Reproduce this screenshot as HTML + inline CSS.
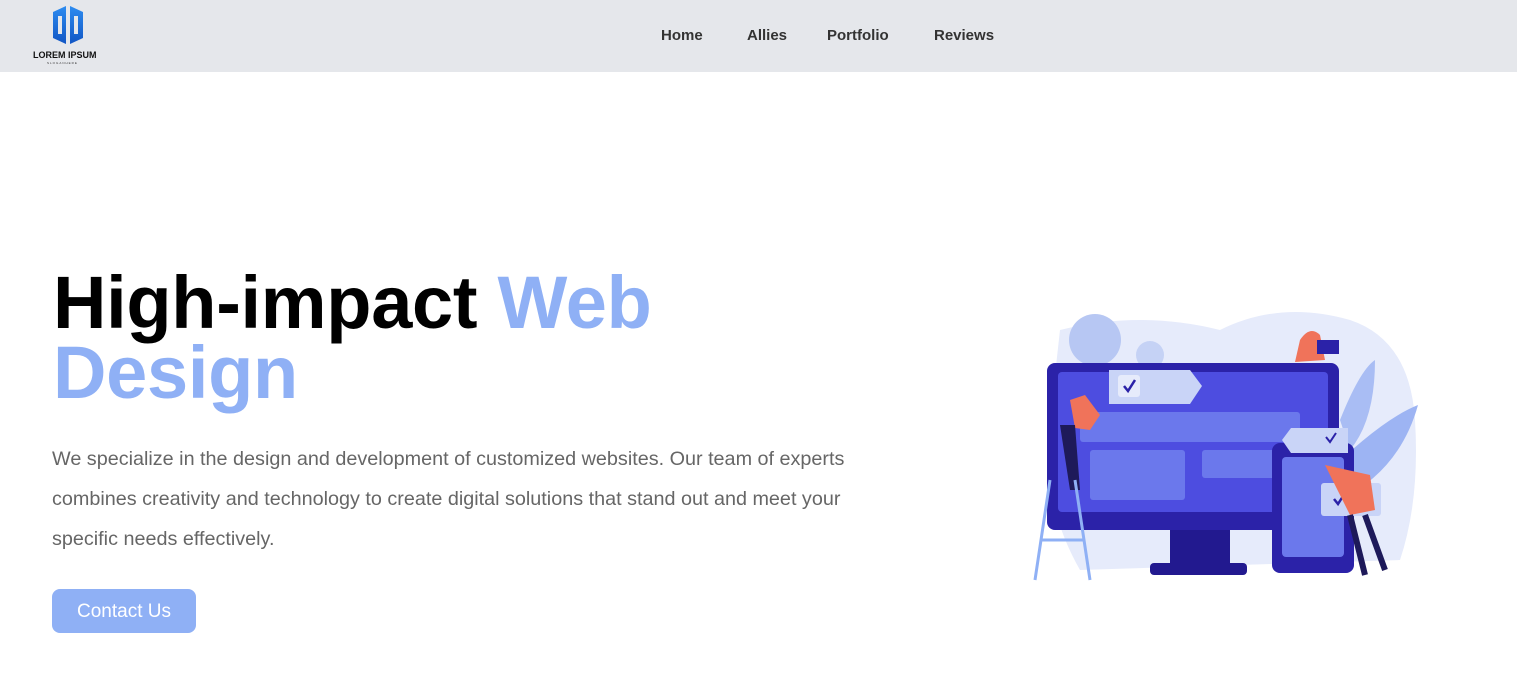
<!DOCTYPE html>
<html><head><meta charset="utf-8"><style>
*{margin:0;padding:0;box-sizing:border-box}
body{width:1517px;height:685px;overflow:hidden;background:#fff;font-family:"Liberation Sans",sans-serif;position:relative}
.nav{position:absolute;top:0;left:0;width:1517px;height:72px;background:#e5e7eb}
.nav a{position:absolute;top:27px;font-size:15px;font-weight:bold;color:#333;text-decoration:none}
h1{position:absolute;left:53px;top:268px;font-size:74px;line-height:70px;font-weight:bold;color:#000;letter-spacing:-0.3px}
h1 span{color:#8fb0f5}
p{position:absolute;left:52px;top:439px;width:830px;font-size:19.8px;line-height:40px;color:#666}
.btn{position:absolute;left:52px;top:589px;width:144px;height:44px;border-radius:8px;background:#8fb0f5;color:#fff;font-size:19px;text-align:center;line-height:46px}
</style></head><body>
<div class="nav">
<svg style="position:absolute;left:50px;top:4px" width="36" height="42" viewBox="0 0 36 42">
<defs><linearGradient id="g" x1="0" y1="0" x2="0" y2="1"><stop offset="0" stop-color="#2d8cf0"/><stop offset="1" stop-color="#1256c4"/></linearGradient></defs>
<path d="M3 8 L16 2 L16 40 L3 34 Z" fill="url(#g)"/><path d="M20 2 L33 8 L33 34 L20 40 Z" fill="url(#g)"/>
<rect x="8" y="12" width="4" height="18" fill="#e5e7eb"/><rect x="24" y="12" width="4" height="18" fill="#e5e7eb"/></svg>
<div style="position:absolute;left:33px;top:50px;font-size:9px;font-weight:bold;color:#111">LOREM IPSUM</div>
<div style="position:absolute;left:47px;top:61px;font-size:3px;letter-spacing:1px;color:#333">SLOGANHERE</div>
<a style="left:661px">Home</a><a style="left:747px">Allies</a><a style="left:827px">Portfolio</a><a style="left:934px">Reviews</a>
</div>
<h1>High-impact <span>Web<br>Design</span></h1>
<p>We specialize in the design and development of customized websites. Our team of experts combines creativity and technology to create digital solutions that stand out and meet your specific needs effectively.</p>
<div class="btn">Contact Us</div>
<svg style="position:absolute;left:1020px;top:300px" width="410" height="290" viewBox="0 0 410 290">
<path d="M40 30 Q120 10 200 30 Q260 0 330 20 Q390 40 395 120 Q400 200 380 260 L60 270 Q20 200 30 120 Z" fill="#e6ebfb"/>
<circle cx="75" cy="40" r="26" fill="#b7c7f3"/><circle cx="130" cy="55" r="14" fill="#c5d2f5"/>
<path d="M300 180 Q360 120 398 105 Q380 170 320 200 Z" fill="#9db4f3"/>
<path d="M320 120 Q340 70 355 60 Q355 120 330 150Z" fill="#a9bdf4"/>
<rect x="27" y="63" width="292" height="167" rx="8" fill="#2b22a8"/>
<rect x="38" y="72" width="270" height="140" rx="4" fill="#4d4de0"/>
<rect x="60" y="112" width="220" height="30" rx="3" fill="#6b78ec"/>
<rect x="70" y="150" width="95" height="50" rx="3" fill="#6b78ec"/>
<rect x="182" y="150" width="100" height="28" rx="3" fill="#6b78ec"/>
<rect x="150" y="230" width="60" height="33" fill="#22198f"/>
<rect x="130" y="263" width="97" height="12" rx="4" fill="#22198f"/>
<rect x="252" y="143" width="82" height="130" rx="8" fill="#2b22a8"/>
<rect x="262" y="157" width="62" height="100" rx="4" fill="#6b78ec"/>
<path d="M89 70 L170 70 L182 86 L170 104 L89 104 Z" fill="#c9d4f7"/>
<rect x="98" y="75" width="22" height="22" rx="3" fill="#e6ebfb"/><path d="M104 86 L108 91 L115 80" stroke="#2b22a8" stroke-width="2.5" fill="none"/>
<path d="M262 140 L271 128 L328 128 L328 153 L271 153 Z" fill="#c9d4f7"/>
<path d="M306 137 L310 142 L316 133" stroke="#2b22a8" stroke-width="2" fill="none"/>
<rect x="301" y="183" width="60" height="33" rx="3" fill="#c9d4f7"/><path d="M314 199 L318 204 L325 193" stroke="#2b22a8" stroke-width="2.5" fill="none"/>
<path d="M50 100 L65 95 L80 115 L70 130 L55 128 Z" fill="#f0735a"/>
<path d="M40 125 L55 125 L60 190 L50 190 Z" fill="#1e1a5a"/>
<path d="M30 180 L15 280 M55 180 L70 280 M20 240 L65 240" stroke="#8fb0f5" stroke-width="3"/>
<path d="M280 40 Q290 25 300 35 L305 60 L275 62 Z" fill="#f0735a"/>
<rect x="297" y="40" width="22" height="14" fill="#2b22a8"/>
<path d="M305 165 L350 175 L355 210 L330 215 Z" fill="#f0735a"/>
<path d="M330 215 L345 275 M345 215 L365 270" stroke="#1e1a5a" stroke-width="6"/>
</svg>
</body></html>
